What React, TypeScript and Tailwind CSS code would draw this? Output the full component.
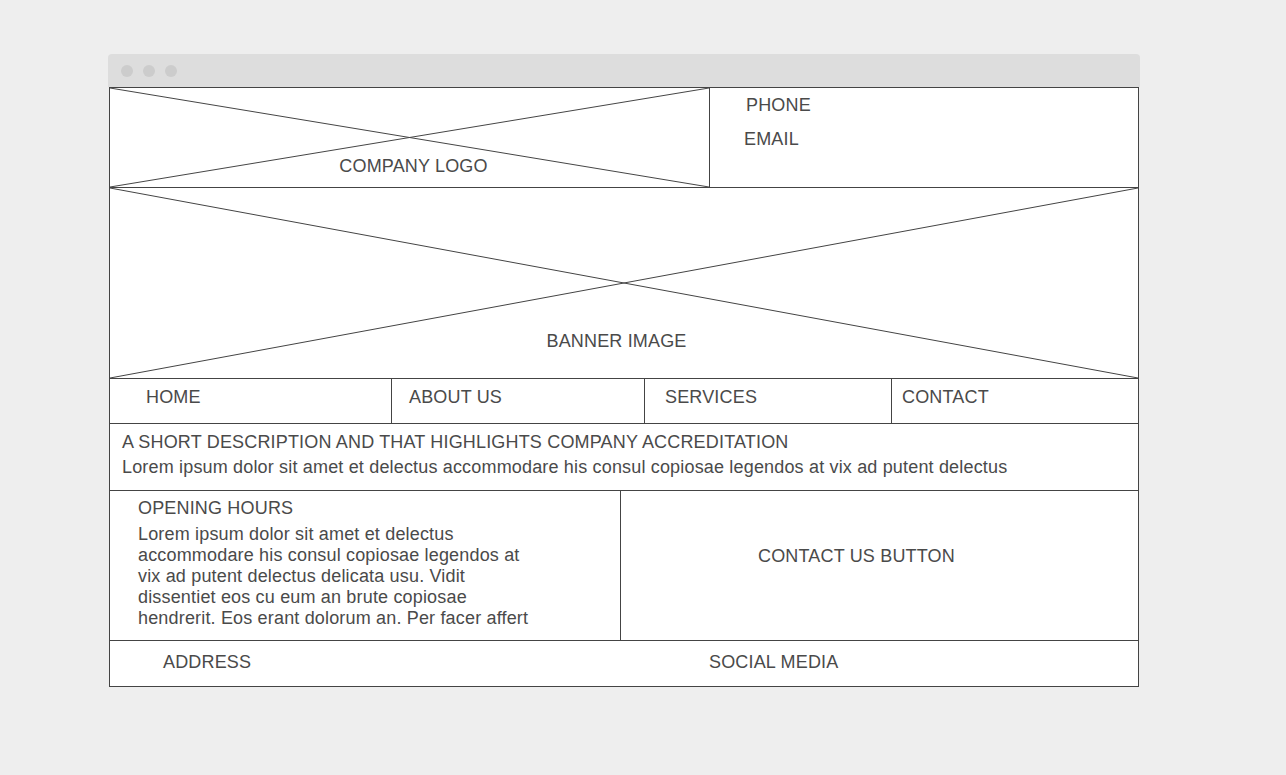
import React from 'react';

const Cross = () => (
  <svg
    className="absolute inset-0 w-full h-full"
    viewBox="0 0 100 100"
    preserveAspectRatio="none"
  >
    <line x1="0" y1="0" x2="100" y2="100" stroke="#444" strokeWidth="1" vectorEffect="non-scaling-stroke" />
    <line x1="0" y1="100" x2="100" y2="0" stroke="#444" strokeWidth="1" vectorEffect="non-scaling-stroke" />
  </svg>
);

const navItems = [
  { label: 'HOME', cls: 'w-[282px] pl-[36px] border-r' },
  { label: 'ABOUT US', cls: 'w-[253px] pl-[17px] border-r' },
  { label: 'SERVICES', cls: 'w-[247px] pl-[20px] border-r' },
  { label: 'CONTACT', cls: 'flex-1 pl-[10px]' },
];

export default function App() {
  return (
    <div
      className="min-h-screen bg-[#eeeeee] pt-[54px] pl-[108px] text-[18px] leading-[21px] tracking-[0.17px] text-[#4a4a4a]"
      style={{ fontFamily: '"Liberation Sans", Arial, sans-serif' }}
    >
      <div className="w-[1032px]">
        {/* window title bar */}
        <div className="h-[33px] bg-[#dddddd] rounded-t-[4px] flex items-center pl-[13px] gap-[10px]">
          <span className="w-[12px] h-[12px] rounded-full bg-[#cccccc]" />
          <span className="w-[12px] h-[12px] rounded-full bg-[#cccccc]" />
          <span className="w-[12px] h-[12px] rounded-full bg-[#cccccc]" />
        </div>

        <div className="ml-px w-[1030px] bg-white border border-[#444]">
          {/* header */}
          <div className="h-[100px] flex border-b border-[#444]">
            <div className="relative w-[600px] border-r border-[#444] flex flex-col justify-end items-center pb-[10px] pl-[8px]">
              <Cross />
              <span className="relative">COMPANY LOGO</span>
            </div>
            <div className="flex flex-col pt-[7px]">
              <span className="pl-[36px]">PHONE</span>
              <span className="pl-[34px] mt-[13px]">EMAIL</span>
            </div>
          </div>

          {/* banner */}
          <div className="relative h-[191px] border-b border-[#444] flex flex-col justify-end items-center pb-[26px] pr-[15px]">
            <Cross />
            <span className="relative">BANNER IMAGE</span>
          </div>

          {/* nav */}
          <div className="h-[45px] flex border-b border-[#444]">
            {navItems.map((n) => (
              <div key={n.label} className={`${n.cls} border-[#444] pt-[8px]`}>
                {n.label}
              </div>
            ))}
          </div>

          {/* description */}
          <div className="h-[67px] border-b border-[#444] pl-[12px] pt-[8px] flex flex-col gap-[4px]">
            <span>A SHORT DESCRIPTION AND THAT HIGHLIGHTS COMPANY ACCREDITATION</span>
            <span>Lorem ipsum dolor sit amet et delectus accommodare his consul copiosae legendos at vix ad putent delectus</span>
          </div>

          {/* opening hours + contact */}
          <div className="h-[150px] flex border-b border-[#444]">
            <div className="w-[511px] border-r border-[#444] pl-[28px] pt-[7px]">
              <div>OPENING HOURS</div>
              <p className="mt-[5px] w-[405px]">
                Lorem ipsum dolor sit amet et delectus accommodare his consul copiosae legendos at vix ad putent
                delectus delicata usu. Vidit dissentiet eos cu eum an brute copiosae hendrerit. Eos erant dolorum an.
                Per facer affert
              </p>
            </div>
            <div className="flex-1 pl-[137px] pt-[55px]">CONTACT US BUTTON</div>
          </div>

          {/* footer */}
          <div className="h-[45px] flex pt-[11px]">
            <span className="w-[599px] pl-[53px]">ADDRESS</span>
            <span>SOCIAL MEDIA</span>
          </div>
        </div>
      </div>
    </div>
  );
}
